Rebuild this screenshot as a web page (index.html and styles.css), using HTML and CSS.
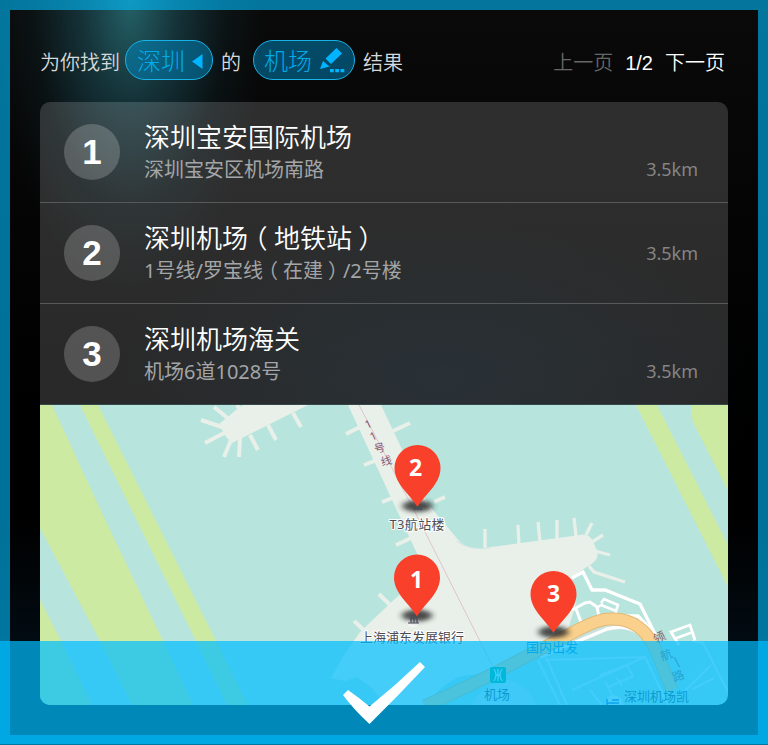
FILE: index.html
```html
<!DOCTYPE html>
<html lang="zh-CN">
<head>
<meta charset="utf-8">
<title>机场</title>
<link rel="stylesheet" href="styles.css">
</head>
<body>
<main class="screen">
  <header class="bar">
    <span>为你找到</span>
    <button class="pill pill-city"><span>深圳</span><svg width="11" height="15" viewBox="0 0 11 15"><path d="M0 7.500 10.500 0v15z" fill="#00b4ff"/></svg></button>
    <span class="of">的</span>
    <button class="pill pill-kind"><span>机场</span><svg width="25" height="25" viewBox="0 0 25 25" fill="#00b4ff"><path d="M16.500 0 22 5.500 11 16 5.500 10.500zM3 13l6.500 5.500L0 21z"/><path d="M10 21h3.800v3.300H10zM15.200 21h3.800v3.300h-3.800zM20.500 21h3.800v3.300h-3.800z"/></svg></button>
    <span class="end">结果</span>
    <nav class="pager"><span class="off">上一页</span><span>1/2</span><span>下一页</span></nav>
  </header>
  <section class="panel">
    <ol class="list">
      <li class="row"><b class="num">1</b><div class="info"><h2>深圳宝安国际机场</h2><p>深圳宝安区机场南路</p></div><span class="dist">3.5km</span></li>
      <li class="row"><b class="num">2</b><div class="info"><h2>深圳机场<i>（</i>地铁站<i>）</i></h2><p>1号线/罗宝线<i>（</i>在建<i>）</i>/2号楼</p></div><span class="dist mid">3.5km</span></li>
      <li class="row"><b class="num">3</b><div class="info"><h2>深圳机场海关</h2><p>机场6道1028号</p></div><span class="dist">3.5km</span></li>
    </ol>
    <svg class="map" width="688" height="300" viewBox="40 405 688 300">
      <defs>
        <filter id="soft" x="-50%" y="-100%" width="200%" height="300%"><feGaussianBlur stdDeviation="3 2"/></filter>
        <g id="pin">
          <ellipse cx="0" cy="-1" rx="15" ry="6" fill="#222" opacity=".8" filter="url(#soft)"/>
          <path d="M0 0C-7-12-23-23-23-39a23 23 0 0 1 46 0C23-23 7-12 0 0z" fill="#f9402a"/>
        </g>
      </defs>
      <rect x="40" y="405" width="688" height="300" fill="#b7e4dd"/>
      <g fill="#cdeaa2">
        <path d="M40 405h12L101 511 163 641 193 705H132L100 641 40 528z"/>
        <path d="M80 405h18L216 641 248 705H227L196 641z"/>
        <path d="M40 600 61 641 92 705H40z"/>
        <path d="M636 405h21L728 545v42z"/>
        <path d="M691 405h37v86L694 424Q691 418 691 405z"/>
      </g>
      <g fill="#e8f0e9">
        <path d="M308 405 232 443 226 437 219 424 236 410 243 405z"/>
        <path d="M348 405H381L428 504 460 542Q469 550 484 548L580 535Q588 533 593 541L597 551Q600 560 588 566L572 577 576 603 568 630 530 656 500 674Q482 672 458 677 438 688 425 705H385L372 688 357 677 345 681 331 678 344 655 360 632 398 596 417 582 420 560z"/>
        <path d="M470 705Q485 684 508 680 530 686 536 705z" fill="#cfe5e8"/>
      </g>
      <g stroke="#e8f0e9" stroke-width="4" fill="none">
        <path d="M201 420 225 428M205 443 228 431M214 407 230 420M224 457 231 440M239 457 240 438M258 450 250 435M276 440 268 425M301 427 293 413M237 405 242 412"/>
        <path d="M346 434 362 426M364 465 377 460M382 502 395 497M396 545 411 538M393 431 410 423M434 502 445 497M379 594 390 605M354 621 366 632"/>
        <path d="M485 529V550M518 525 519 545M538 522 540 542M557 520V540M574 518 576 536M592 523 586 535M603 535 592 542M610 555 595 551M589 566 594 572 625 582" stroke-width="3.300"/>
      </g>
      <path d="M456 541Q470 551 490 548" stroke="#d3e5df" fill="none"/>
      <g stroke="#eef6f6" stroke-width="2.200" fill="none" opacity=".7">
        <path d="M538 660 560 705M546 657 567 705M545 660 646 657M572 690 645 657 668 705M590 690 602 705M605 681 616 703M617 678 622 686M600 675 627 665 633 676 609 687M692 641 703 643 728 692M693 689 714 678M679 697 711 665"/>
      </g>
      <path d="M540 657 607 628Q636 621 656 647" stroke="#cde0dc" stroke-width="6" fill="none"/>
      <g stroke="#fff" stroke-width="3.400" fill="none">
        <path d="M540 657 607 629Q636 621 652 648M572 578 583 572 592 590 605 590 640 604 656 636"/>
        <path d="M572 610 585 603 590 602 597 607 599 617M576 609 581 622" stroke-width="3"/>
        <path d="M598 607 603 604M601 603 604 599 618 605 616 611 601 605M615 610 617 615" stroke-width="2.600"/>
        <path d="M622 616 638 616 655 634"/>
        <path d="M679 645 671 632 690 625 695 640M674 639 693 632" stroke-width="2.800"/>
      </g>
      <path d="M425 706Q480 681 512 664L574 632Q598 619 610 619Q632 618 646 634Q655 646 660 660L672 690" fill="none" stroke="#e4b977" stroke-width="13"/>
      <path d="M425 706Q480 681 512 664L574 632Q598 619 610 619Q632 618 646 634Q655 646 660 660L672 690" fill="none" stroke="#fad18c" stroke-width="11"/>
      <path d="M359 405 416 514 492 665" stroke="#dfc5ca" fill="none"/>
      <g class="line-name"><text transform="translate(367 429) rotate(-25)">1</text><text transform="translate(372 441) rotate(-25)">1</text><text transform="translate(375 453) rotate(-12)">号</text><text transform="translate(382 466) rotate(-14)">线</text></g>
      <g class="road-name"><text transform="translate(656 644) rotate(-28)">领</text><text transform="translate(662 661) rotate(-20)">航</text><text transform="translate(670 659) rotate(62)">一</text><text transform="translate(674 682) rotate(-20)">路</text></g>
      <rect x="490" y="667" width="16" height="16" rx="2" fill="#00aa83"/>
      <path d="M494 669q4 6 0 12M502 669q-4 6 0 12M495.500 675h5M498 669v12" stroke="#dff3ef" fill="none" stroke-width="1.300"/>
      <circle cx="614" cy="704" r="9" fill="#e6f0f4"/>
      <path d="M607 699v6M607 703h12M612 700h7" stroke="#276ad2" stroke-width="1.500" fill="none"/>
      <circle cx="413" cy="620" r="7" fill="#f8f8f8"/>
      <use href="#pin" x="417.500" y="507"/><use href="#pin" x="417" y="616.500"/><use href="#pin" x="553.500" y="633"/>
      <path d="M413 509h9M415 506v4M418 506v4M421 506v4M408 623h11M410 618h7M411 618v5M414 618v5M417 618v5" stroke="#444c58" fill="none" stroke-width="1.200"/>
      <g class="pin-num"><text x="415.500" y="476">2</text><text x="416.500" y="588">1</text><text x="553.500" y="602">3</text></g>
      <g class="place"><text x="389.500" y="529" textLength="55">T3航站楼</text><text x="360" y="641.500" textLength="104">上海浦东发展银行</text></g>
      <g class="place blue"><text x="526" y="651.500">国内出发</text></g>
      <g class="place dim"><text x="484" y="698.500">机场</text><text x="624" y="701">深圳机场凯</text></g>
    </svg>
  </section>
  <div class="confirm"><svg width="82" height="62" viewBox="343 662 82 62"><path d="M343 695 348 690Q358 697 369.500 706.500Q396 685 420 662L425 667Q397 697 369.500 724 355 711 343 695z" fill="#fff"/></svg></div>
</main>
</body>
</html>
```
FILE: styles.css
```css
* { box-sizing: border-box; margin: 0; padding: 0; }
body {
  width: 768px;
  height: 745px;
  overflow: hidden;
  color: #fff;
  font-family: "Noto Sans", "Noto Sans CJK SC", sans-serif;
  font-weight: 350;
}
.screen {
  position: relative;
  height: 745px;
  padding: 40px 40px 0;
  background:
    radial-gradient(ellipse 135px 290px at 130px 0, rgba(38, 105, 112, .92), rgba(30, 85, 96, .55) 35%, rgba(20, 60, 70, .2) 70%, transparent),
    radial-gradient(ellipse 330px 160px at 440px 380px, rgba(0, 14, 24, .7), transparent),
    linear-gradient(to bottom, #0a0a0a, #050505 200px, #000 400px, #000 520px, #020b12 640px);
}
.screen::before {
  content: "";
  position: absolute;
  inset: 0;
  border: 10px solid rgba(0, 190, 255, .6);
}
.bar {
  position: relative;
  display: flex;
  align-items: center;
  height: 40px;
  padding-right: 3px;
  font-size: 20px;
  line-height: 40px;
  color: #d6dada;
}
.bar > span, .pager { padding-top: 6px; }
.pill {
  display: flex;
  align-items: center;
  justify-content: space-between;
  height: 40px;
  padding: 0 9px 0 11px;
  border: 1px solid #18b2e8;
  border-radius: 20px;
  background: rgba(0, 135, 190, .52);
  color: #00abea;
  font: 300 24px/36px "Noto Sans CJK SC", sans-serif;
}
.pill span { padding-bottom: 1px; }
.pill-city { width: 88px; margin-left: 5px; }
.pill-city svg { margin-top: 3px; }
.pill-kind { width: 102px; margin-left: 12px; padding-left: 10px; }
.pill-kind svg { margin-top: 0; }
.of { margin-left: 8px; }
.end { margin-left: 8px; }
.pager {
  display: flex;
  gap: 12px;
  margin-left: auto;
  color: #fff;
  font-family: "Liberation Sans", "Noto Sans CJK SC", sans-serif;
}
.pager .off { color: #666; }
.panel {
  position: relative;
  margin-top: 22px;
  height: 603px;
  border-radius: 10px;
  overflow: hidden;
}
.list { list-style: none; background: rgba(255, 255, 255, .16); }
.row {
  display: flex;
  height: 101px;
  padding: 0 30px 0 24px;
  border-bottom: 1px solid #58595b;
}
.row:last-child { border-color: #36474c; }
.num {
  width: 56px;
  height: 56px;
  margin: 22px 24px 0 0;
  border-radius: 50%;
  background: rgba(255, 255, 255, .2);
  font: bold 35px/56px "Liberation Sans", sans-serif;
  text-align: center;
}
.info { flex: 1; padding-top: 18px; }
h2 { font-size: 26px; line-height: 34px; font-weight: 350; }
p { margin-top: 1px; font-size: 20px; line-height: 30px; font-weight: 400; color: #a3a5a7; }
i {
  display: inline-block;
  width: 1em;
  text-align: center;
  font-style: normal;
  font-family: "Noto Sans CJK SC", sans-serif;
  font-feature-settings: "halt";
  line-height: 1;
}
.dist { align-self: flex-end; margin-bottom: 19px; font-size: 18px; font-weight: 400; line-height: 28px; color: #858585; }
.dist.mid { align-self: center; margin-bottom: 0; }
.map { display: block; }
.map text { font-family: "Noto Sans", "Noto Sans CJK SC", sans-serif; font-weight: 400; }
.line-name text { font-size: 11px; fill: #8c5270; }
.road-name text { font-size: 12px; fill: #87605e; }
.map .pin-num text { font: bold 23px "Open Sans", sans-serif; fill: #fff; text-anchor: middle; }
.place text { font-size: 13px; fill: #4b4d55; stroke: #fff; stroke-width: 2px; paint-order: stroke; }
.place.blue text { fill: #007dc0; stroke: none; }
.place.dim text { stroke: none; fill: #30485c; }
.confirm {
  position: absolute;
  left: 0;
  right: 0;
  bottom: 1px;
  height: 103px;
  display: flex;
  justify-content: center;
  padding-top: 21px;
  background: rgba(0, 190, 255, .7);
}
```
